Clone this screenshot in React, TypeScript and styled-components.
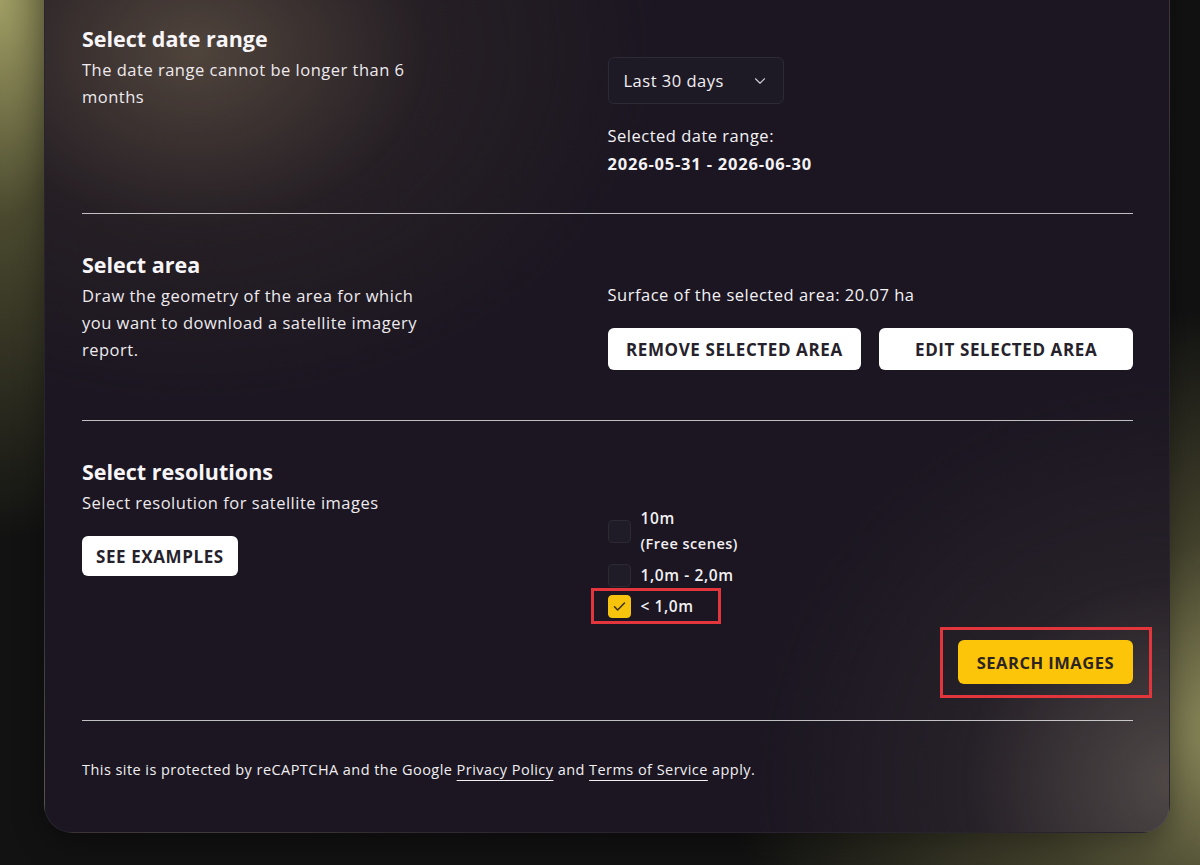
import styled, { createGlobalStyle } from 'styled-components';
import { ChevronDown } from 'lucide-react';

const GlobalStyle = createGlobalStyle`
  html, body {
    margin: 0;
    height: 100%;
  }
  body {
    overflow: hidden;
    font-family: "Open Sans", "Noto Sans", sans-serif;
    color: #f4f2f5;
    background:
      radial-gradient(ellipse 260px 540px at 0 0, #a09e64 0%, rgba(120, 118, 70, 0.55) 40%, rgba(20, 20, 18, 0) 100%),
      radial-gradient(ellipse 520px 420px at 1240px 730px, #8e8c5c 0%, rgba(100, 98, 62, 0.6) 45%, rgba(20, 20, 18, 0) 100%),
      #121212;
  }
`;

const Page = styled.div`
  padding: 0 30px 0 44px;
`;

const Card = styled.main`
  width: 1126px;
  box-sizing: border-box;
  margin-top: -60px;
  padding: 0 36px 0 37px;
  border-radius: 28px;
  border: 1px solid rgba(255, 255, 255, 0.06);
  background:
    radial-gradient(ellipse 460px 350px at 150px 110px, rgba(112, 96, 76, 0.62) 0%, rgba(60, 50, 44, 0.32) 50%, rgba(27, 22, 32, 0) 100%),
    radial-gradient(ellipse 420px 400px at 1130px 840px, rgba(100, 92, 86, 0.72) 0%, rgba(60, 54, 54, 0.32) 50%, rgba(27, 22, 32, 0) 100%),
    #1b1621;
  box-shadow: 0 10px 30px rgba(0, 0, 0, 0.35);
`;

const Section = styled.section<{ $top: number; $bottom: number }>`
  display: grid;
  grid-template-columns: 1fr 1fr;
  padding: ${(p) => p.$top}px 0 ${(p) => p.$bottom}px;
  border-bottom: 1px solid rgba(255, 255, 255, 0.72);
`;

const LeftCol = styled.div`
  display: flex;
  flex-direction: column;
  align-items: flex-start;
`;

const RightCol = styled.div<{ $offset: number }>`
  display: flex;
  flex-direction: column;
  align-items: stretch;
  padding-top: ${(p) => p.$offset}px;
`;

const Title = styled.h2`
  margin: 0 0 3px;
  font-size: 21.5px;
  line-height: 28px;
  font-weight: 700;
  color: #f7f5f8;
`;

const Desc = styled.p`
  margin: 0;
  max-width: 355px;
  font-size: 16.5px;
  letter-spacing: 0.5px;
  line-height: 27px;
  color: #eeeaee;
`;

const Select = styled.button`
  display: flex;
  align-items: center;
  justify-content: space-between;
  width: 176px;
  height: 47px;
  box-sizing: border-box;
  padding: 0 14px 0 15px;
  border: 1px solid #2e2a35;
  border-radius: 6px;
  background: #1e1a25;
  color: #f2f0f3;
  font-family: inherit;
  font-size: 16.5px;
  letter-spacing: 0.5px;
  svg {
    color: #cfcbd2;
  }
`;

const Text = styled.div<{ $bold?: boolean }>`
  font-size: 16.5px;
  letter-spacing: ${(p) => (p.$bold ? 0.8 : 0.5)}px;
  line-height: 28px;
  font-weight: ${(p) => (p.$bold ? 700 : 400)};
`;

const DateInfo = styled.div`
  margin-top: 18px;
`;

const ButtonRow = styled.div`
  display: grid;
  grid-template-columns: 1fr 1fr;
  gap: 18px;
  margin-top: 19px;
`;

const LightButton = styled.button<{ $pad?: number }>`
  height: 42px;
  padding: 0 ${(p) => p.$pad ?? 18}px;
  border: none;
  border-radius: 6px;
  background: #ffffff;
  color: #26222b;
  font-family: inherit;
  font-size: 17px;
  letter-spacing: 0.6px;
  font-weight: 700;
  text-transform: uppercase;
`;

const ExamplesButton = styled(LightButton)`
  height: 40px;
  margin-top: 20px;
`;

const CheckList = styled.div`
  display: flex;
  flex-direction: column;
  align-items: flex-start;
  gap: 5px;
`;

const CheckRow = styled.label<{ $highlight?: boolean }>`
  position: relative;
  display: flex;
  align-items: center;
  gap: 10px;
  ${(p) =>
    p.$highlight &&
    `
    &::after {
      content: '';
      position: absolute;
      left: -17px;
      right: -27px;
      top: -5px;
      bottom: -5px;
      border: 3px solid #e2363c;
    }
  `}
`;

const Box = styled.span<{ $checked?: boolean }>`
  display: flex;
  align-items: center;
  justify-content: center;
  width: 23px;
  height: 23px;
  box-sizing: border-box;
  border-radius: 4px;
  border: 1px solid ${(p) => (p.$checked ? '#f7c30c' : '#2c2933')};
  background: ${(p) => (p.$checked ? '#f7c30c' : '#201c27')};
`;

const CheckLabel = styled.span`
  display: flex;
  flex-direction: column;
  font-size: 15.5px;
  letter-spacing: 0.6px;
  line-height: 26px;
  font-weight: 600;
  color: #f2f0f3;
  small {
    font-size: 14.5px;
    letter-spacing: 0.5px;
    font-weight: 600;
  }
`;

const ActionRow = styled.div`
  grid-column: 1 / -1;
  display: flex;
  justify-content: flex-end;
  margin-top: 21px;
`;

const Highlight = styled.div`
  position: relative;
  &::after {
    content: '';
    position: absolute;
    left: -18px;
    right: -19px;
    top: -13px;
    bottom: -14px;
    border: 3px solid #e2363c;
  }
`;

const SearchButton = styled.button`
  height: 44px;
  padding: 0 19px;
  border: none;
  border-radius: 6px;
  background: #fcc509;
  color: #2b2420;
  font-family: inherit;
  font-size: 16.5px;
  letter-spacing: 0.5px;
  font-weight: 700;
  text-transform: uppercase;
`;

const Footer = styled.footer`
  padding: 39px 0 52px;
  font-size: 14.5px;
  letter-spacing: 0.45px;
  line-height: 20px;
  font-weight: 500;
  color: #f1eff2;
  a {
    color: inherit;
    text-decoration: underline;
    text-underline-offset: 5px;
    text-decoration-thickness: 1px;
  }
`;

function Check() {
  return (
    <svg width="15" height="15" viewBox="0 0 24 24" fill="none" stroke="#3a2f10" strokeWidth="2.4" strokeLinecap="round" strokeLinejoin="round">
      <path d="M4 12.5l5 5L20 6.5" />
    </svg>
  );
}

export default function App() {
  return (
    <>
      <GlobalStyle />
      <Page>
        <Card>
          <Section $top={84} $bottom={35}>
            <LeftCol>
              <Title>Select date range</Title>
              <Desc>The date range cannot be longer than 6 months</Desc>
            </LeftCol>
            <RightCol $offset={32}>
              <Select>
                Last 30 days
                <ChevronDown size={18} strokeWidth={1.5} />
              </Select>
              <DateInfo>
                <Text>Selected date range:</Text>
                <Text $bold>2026-05-31 - 2026-06-30</Text>
              </DateInfo>
            </RightCol>
          </Section>

          <Section $top={37} $bottom={50}>
            <LeftCol>
              <Title>Select area</Title>
              <Desc>Draw the geometry of the area for which you want to download a satellite imagery report.</Desc>
            </LeftCol>
            <RightCol $offset={30}>
              <Text>Surface of the selected area: 20.07 ha</Text>
              <ButtonRow>
                <LightButton>Remove selected area</LightButton>
                <LightButton>Edit selected area</LightButton>
              </ButtonRow>
            </RightCol>
          </Section>

          <Section $top={37} $bottom={36}>
            <LeftCol>
              <Title>Select resolutions</Title>
              <Desc>Select resolution for satellite images</Desc>
              <ExamplesButton $pad={14}>See examples</ExamplesButton>
            </LeftCol>
            <RightCol $offset={47}>
              <CheckList>
                <CheckRow>
                  <Box />
                  <CheckLabel>
                    10m
                    <small>(Free scenes)</small>
                  </CheckLabel>
                </CheckRow>
                <CheckRow>
                  <Box />
                  <CheckLabel>1,0m - 2,0m</CheckLabel>
                </CheckRow>
                <CheckRow $highlight>
                  <Box $checked>
                    <Check />
                  </Box>
                  <CheckLabel>&lt; 1,0m</CheckLabel>
                </CheckRow>
              </CheckList>
            </RightCol>
            <ActionRow>
              <Highlight>
                <SearchButton>Search images</SearchButton>
              </Highlight>
            </ActionRow>
          </Section>

          <Footer>
            This site is protected by reCAPTCHA and the Google <a href="#">Privacy Policy</a> and{' '}
            <a href="#">Terms of Service</a> apply.
          </Footer>
        </Card>
      </Page>
    </>
  );
}
